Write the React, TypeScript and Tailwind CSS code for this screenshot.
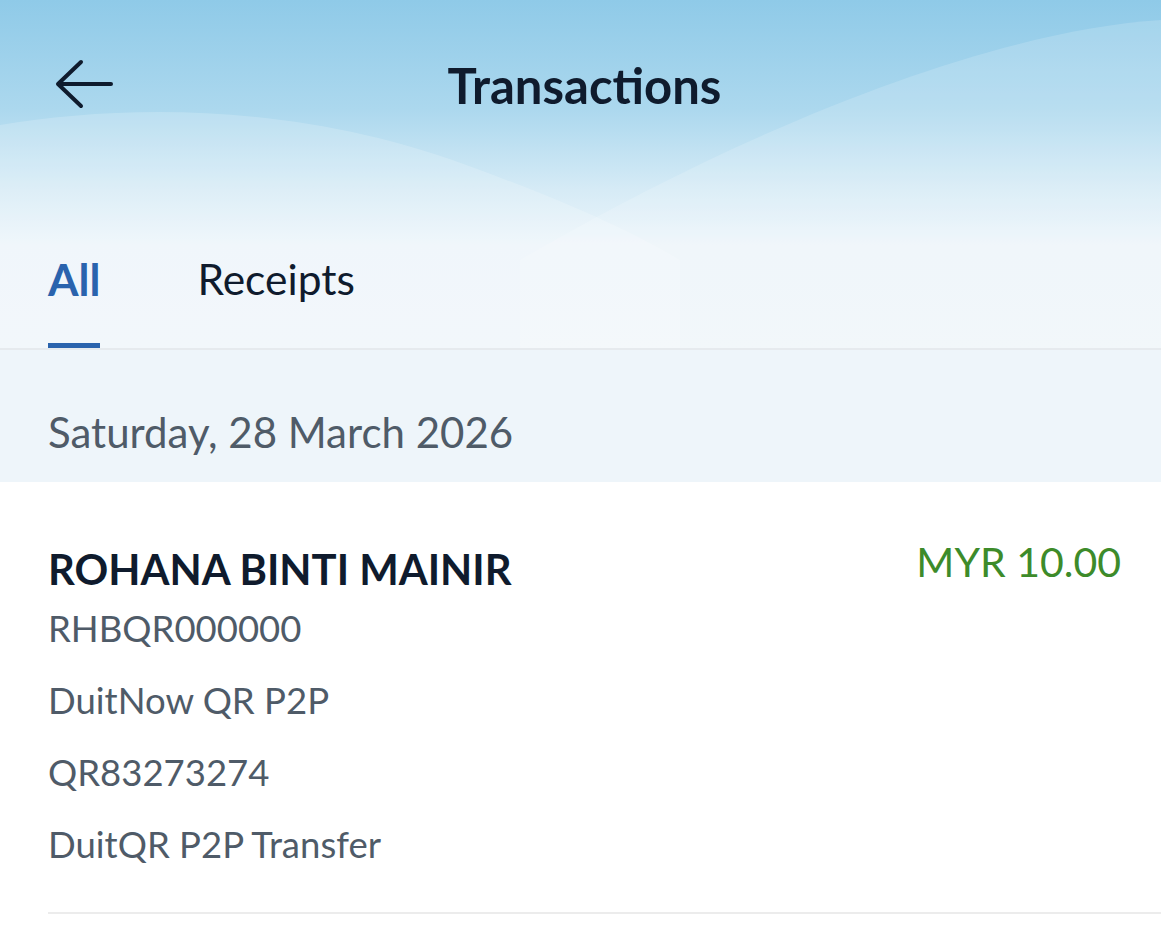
import React from "react";

function BackArrow() {
  return (
    <svg width="62" height="52" viewBox="0 0 62 52" fill="none">
      <path d="M58 25H6" stroke="#0f1b2d" strokeWidth="4" strokeLinecap="round" />
      <path d="M28 3L5 25L28 47" stroke="#0f1b2d" strokeWidth="4" strokeLinecap="round" strokeLinejoin="round" />
    </svg>
  );
}

function Waves() {
  return (
    <svg className="absolute inset-0 w-full h-full" viewBox="0 0 1161 350" preserveAspectRatio="none">
      <path d="M1161 20 C 1000 30, 760 120, 520 260 L 520 350 L 1161 350 Z" fill="#ffffff" fillOpacity="0.16" />
      <path d="M0 125 C 120 105, 300 100, 480 170 C 560 200, 620 225, 680 260 L 680 350 L 0 350 Z" fill="#ffffff" fillOpacity="0.18" />
    </svg>
  );
}

export default function App() {
  return (
    <div className="w-[1161px] h-[926px] overflow-hidden bg-white font-['Lato',_'Noto_Sans',_sans-serif]">
      <div className="relative bg-[linear-gradient(180deg,#8fcae8_0px,#acd8ee_110px,#d6ebf6_190px,#edf5fa_245px,#f0f6fa_350px)]">
        <Waves />
        <div className="relative h-[170px] flex items-center px-[53px]">
          <BackArrow />
          <div className="absolute inset-0 flex items-center justify-center">
            <span className="text-[49px] leading-[56px] font-bold text-[#0f1b2d] pl-[8px]">Transactions</span>
          </div>
        </div>
        <div className="relative h-[180px] flex items-end gap-[97px] px-[48px] border-b-2 border-[#e6eaee]">
          <div className="flex flex-col">
            <span className="text-[44px] leading-[50px] font-bold text-[#2a63ad]">All</span>
            <div className="mt-[39px] h-[5px] bg-[#2a63ad]" />
          </div>
          <div className="flex flex-col">
            <span className="text-[42.5px] leading-[50px] text-[#0f1b2d]">Receipts</span>
            <div className="mt-[39px] h-[5px]" />
          </div>
        </div>
      </div>
      <div className="bg-[#eef5fa] h-[132px] pt-[57px] px-[48px]">
        <div className="text-[42px] leading-[50px] text-[#4f5b68]">Saturday, 28 March 2026</div>
      </div>
      <div className="pl-[48px]">
        <div className="flex items-start justify-between pt-[64px] pb-[32px] pr-[40px] border-b-2 border-[#ececec]">
          <div className="flex flex-col">
            <div className="text-[41.8px] leading-[46px] font-bold text-[#0f1b2d]">ROHANA BINTI MAINIR</div>
            <div className="text-[36.5px] leading-[72px] text-[#4f5b68]">RHBQR000000</div>
            <div className="text-[36.5px] leading-[72px] text-[#4f5b68]">DuitNow QR P2P</div>
            <div className="text-[36.5px] leading-[72px] text-[#4f5b68]">QR83273274</div>
            <div className="text-[36.5px] leading-[72px] text-[#4f5b68]">DuitQR P2P Transfer</div>
          </div>
          <div className="-mt-[7px] text-[41px] leading-[46px] text-[#3d8b2a]">MYR 10.00</div>
        </div>
      </div>
    </div>
  );
}
